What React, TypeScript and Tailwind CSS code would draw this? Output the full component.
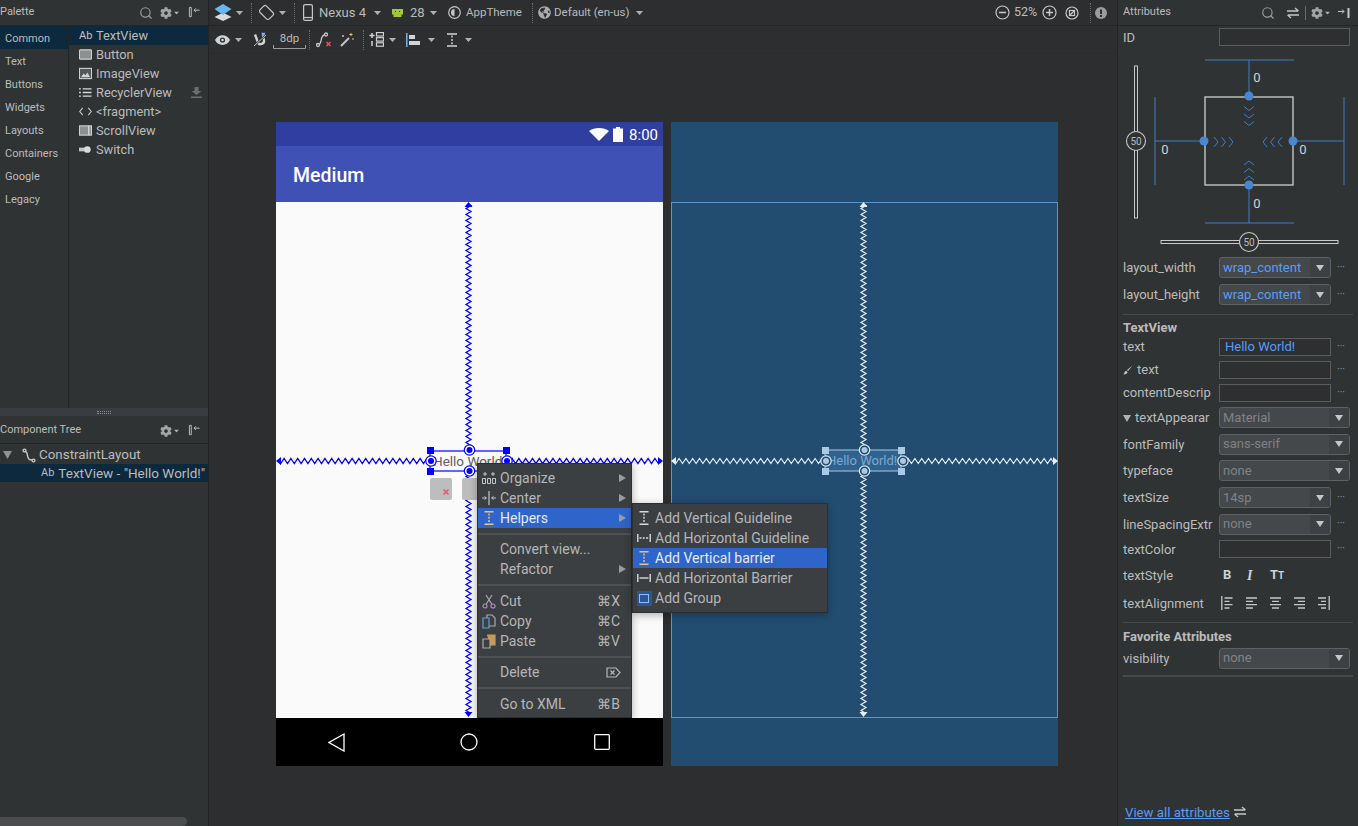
import { Search } from "lucide-react";
import { FaCog, FaGlobeAmericas } from "react-icons/fa";
import type { ReactNode } from "react";

const font = "font-['Roboto','Liberation_Sans',sans-serif]";

function zigzagV(x: number, y1: number, y2: number) {
  let d = `M${x} ${y1}`;
  let side = 1;
  for (let y = y1 + 1.5; y < y2; y += 3) {
    d += ` L${x + side * 2.5} ${y}`;
    side = -side;
  }
  return d;
}

function zigzagH(y: number, x1: number, x2: number) {
  let d = `M${x1} ${y}`;
  let side = 1;
  for (let x = x1 + 1.7; x < x2; x += 3.4) {
    d += ` L${x} ${y + side * 2.5}`;
    side = -side;
  }
  return d;
}

const Caret = ({ className = "" }: { className?: string }) => (
  <svg width="7" height="4" viewBox="0 0 7 4" className={`shrink-0 ${className}`}>
    <path d="M0 0h7L3.5 4z" fill="#afb1b3" />
  </svg>
);

const DottedSep = ({ className = "" }: { className?: string }) => (
  <div className={`h-[20px] w-0 shrink-0 border-l border-dotted border-[#6a6c6e] ${className}`} />
);

function Ico({ size = 14, children, className = "" }: { size?: number; children: ReactNode; className?: string }) {
  return (
    <svg width={size} height={size} viewBox="0 0 14 14" fill="none" stroke="#c4c6c8" strokeWidth="1.2" className={`shrink-0 ${className}`}>
      {children}
    </svg>
  );
}

const PinIcon = () => (
  <Ico size={13}>
    <path d="M1.5 1.5h2v10h-2z" strokeWidth="1" />
    <path d="M12.5 4.5H6.5M8.5 2.5l-2 2 2 2" strokeWidth="1" />
  </Ico>
);

const paletteCats = ["Common", "Text", "Buttons", "Widgets", "Layouts", "Containers", "Google", "Legacy"];

const paletteItems: { label: string; icon: ReactNode; h: string }[] = [
  { label: "TextView", h: "h-[19px]", icon: <span className="w-[13px] text-[11px] leading-none text-[#c4c6c8]">Ab</span> },
  {
    label: "Button",
    h: "h-[19px]",
    icon: (
      <Ico size={13}>
        <rect x="0.5" y="2" width="13" height="10" rx="1" fill="#8d8f91" stroke="#d0d0d0" />
      </Ico>
    ),
  },
  {
    label: "ImageView",
    h: "h-[19px]",
    icon: (
      <Ico size={13}>
        <rect x="0.5" y="1.5" width="13" height="11" fill="#55585a" stroke="#d0d0d0" />
        <path d="M2 11l3-4 2 2 2-3 3 5z" fill="#d0d0d0" stroke="none" />
      </Ico>
    ),
  },
  {
    label: "RecyclerView",
    h: "h-[19px]",
    icon: (
      <Ico size={13}>
        <path d="M0 3h2M4 3h9.5M0 7h2M4 7h9.5M0 11h2M4 11h9.5" stroke="#d8d8d8" strokeWidth="1.4" />
      </Ico>
    ),
  },
  {
    label: "<fragment>",
    h: "h-[19px]",
    icon: (
      <Ico size={13}>
        <path d="M4 3L0.8 7 4 11M10 3l3.2 4L10 11" />
      </Ico>
    ),
  },
  {
    label: "ScrollView",
    h: "h-[19px]",
    icon: (
      <Ico size={13}>
        <rect x="0.5" y="2" width="13" height="10" fill="#8d8f91" stroke="#d0d0d0" />
        <path d="M10.5 2v10" stroke="#d0d0d0" strokeWidth="1.6" />
      </Ico>
    ),
  },
  {
    label: "Switch",
    h: "h-[19px]",
    icon: (
      <Ico size={13}>
        <rect x="0" y="5" width="8" height="4" fill="#c4c6c8" stroke="none" />
        <circle cx="9" cy="7" r="3.6" fill="#dadada" stroke="none" />
      </Ico>
    ),
  },
];

function LeftPanel() {
  return (
    <aside className="flex h-full w-[209px] shrink-0 flex-col border-r border-[#212325] bg-[#303334]">
      <header className="flex h-[26px] shrink-0 items-center border-b border-[#232527] text-[11px] text-[#bbbbbb]">
        <span className="flex-1">Palette</span>
        <Search size={14} color="#9a9c9e" className="mr-[7px]" />
        <FaCog size={12} color="#a2a4a6" />
        <Caret className="ml-[1px] mr-[8px] scale-75" />
        <PinIcon />
        <span className="w-[7px]" />
      </header>
      <div className="flex h-[382px] shrink-0">
        <div className="w-[69px] shrink-0 border-r border-[#222426]">
          {paletteCats.map((c, i) => (
            <div key={c} className={`flex h-[23px] items-center pl-[5px] pt-[3px] text-[11px] text-[#bbbbbb] ${i === 0 ? "bg-[#0d293e]" : ""}`}>
              {c}
            </div>
          ))}
        </div>
        <div className="flex-1">
          {paletteItems.map((it, i) => (
            <div
              key={it.label}
              className={`flex ${it.h} items-center gap-[4px] pl-[10px] text-[12.8px] text-[#bbbbbb] ${i === 0 ? "bg-[#0d293e]" : ""}`}
            >
              {it.icon}
              <span className="flex-1">{it.label}</span>
              {it.label === "RecyclerView" && (
                <svg width="11" height="11" viewBox="0 0 11 11" className="mr-[6px]">
                  <path d="M3.5 0h4v4h3L5.500 8 .5 4h3zM0 9.500h11V11H0z" fill="#6c6e70" />
                </svg>
              )}
            </div>
          ))}
        </div>
      </div>
      <div className="flex h-[8px] shrink-0 items-center justify-center bg-[#3a3d3f]">
        <div className="h-[3px] w-[14px] border-y border-dotted border-[#8a8c8e]" />
      </div>
      <div className="flex h-[28px] shrink-0 items-center border-b border-[#232527] pt-[2px] text-[11px] text-[#bbbbbb]">
        <span className="flex-1">Component Tree</span>
        <FaCog size={12} color="#a2a4a6" />
        <Caret className="ml-[1px] mr-[8px] scale-75" />
        <PinIcon />
        <span className="w-[7px]" />
      </div>
      <div className="flex h-[20px] shrink-0 items-center pl-[3px] pt-[2px] text-[13.4px] text-[#bbbbbb]">
        <svg width="9" height="8" viewBox="0 0 9 8" className="mr-[10px]">
          <path d="M0 0h9L4.500 8z" fill="#8f9193" />
        </svg>
        <svg width="14" height="15" viewBox="0 0 14 15" fill="none" stroke="#c8c8c8" strokeWidth="1.4" className="mr-[3px]">
          <circle cx="2.500" cy="2.500" r="1.400" />
          <circle cx="11.500" cy="12.500" r="1.400" />
          <path d="M3.500 3.500c3 1 1 7 4 8l2.500.5" />
        </svg>
        ConstraintLayout
      </div>
      <div className="flex h-[18px] shrink-0 items-center overflow-hidden whitespace-nowrap bg-[#0d293e] pl-[41px] text-[13.5px] text-[#bbbbbb]">
        <span className="mr-[4px] text-[11px]">Ab</span>TextView - "Hello World!"
      </div>
      <div className="flex-1" />
      <div className="h-[9px] w-[187px] shrink-0 rounded-r-full bg-[#4b4d4e]" />
    </aside>
  );
}

function TopToolbar() {
  return (
    <div className="flex h-[26px] shrink-0 items-center border-b border-[#232527] pl-[5px] text-[12.5px] text-[#bbbbbb]">
      <svg width="18" height="17" viewBox="0 0 18 17" className="shrink-0">
        <path d="M9 8.500L0.500 13 9 17l8.500-4z" fill="#d8dadc" />
        <path d="M9 0L0.500 5 9 11l8.500-6z" fill="#6bb5ef" />
      </svg>
      <Caret className="ml-[4px]" />
      <DottedSep className="ml-[8px]" />
      <svg width="17" height="17" viewBox="0 0 17 17" fill="none" stroke="#c4c6c8" strokeWidth="1.200" className="ml-[6px] shrink-0">
        <g transform="rotate(-45 8.500 8.500)">
          <rect x="4" y="2" width="9" height="13" rx="2" />
        </g>
      </svg>
      <Caret className="ml-[4px]" />
      <DottedSep className="ml-[8px]" />
      <svg width="10" height="17" viewBox="0 0 10 17" fill="none" stroke="#c4c6c8" strokeWidth="1.2" className="ml-[8px] shrink-0">
        <rect x="0.600" y="0.600" width="8.800" height="15.800" rx="1.500" />
        <path d="M1 13.500h8" />
      </svg>
      <span className="ml-[6px] w-[49px] whitespace-nowrap text-[13px]">Nexus 4</span>
      <Caret className="ml-[6px]" />
      <svg width="11" height="8" viewBox="0 0 11 8" className="ml-[11px] shrink-0">
        <path d="M0 0h11v5.500H9.500V8h-8V5.500H0z" fill="#a4c639" />
        <path d="M3 2h1v1H3zM7 2h1v1H7z" fill="#2d2f31" />
      </svg>
      <span className="ml-[7px] w-[15px] text-[13px]">28</span>
      <Caret className="ml-[5px]" />
      <svg width="13" height="13" viewBox="0 0 13 13" className="ml-[11px] shrink-0">
        <circle cx="6.500" cy="6.500" r="5.800" fill="none" stroke="#c4c6c8" strokeWidth="1.200" />
        <path d="M6.500 3a3.500 3.500 0 0 0 0 7z" fill="#c4c6c8" />
      </svg>
      <span className="ml-[5px] w-[56px] whitespace-nowrap text-[11.500px]">AppTheme</span>
      <DottedSep className="ml-[10px]" />
      <FaGlobeAmericas size={13} color="#a9abad" className="ml-[5px] shrink-0" />
      <span className="ml-[3px] w-[74px] whitespace-nowrap text-[11.500px]">Default (en-us)</span>
      <Caret className="ml-[8px]" />
      <div className="flex-1" />
      <svg width="15" height="15" viewBox="0 0 15 15" fill="none" stroke="#c4c6c8" strokeWidth="1.200" className="shrink-0">
        <circle cx="7.500" cy="7.500" r="6.500" />
        <path d="M4 7.500h7" strokeWidth="1.600" />
      </svg>
      <span className="ml-[4px] w-[24px] text-[12.5px]">52%</span>
      <svg width="15" height="15" viewBox="0 0 15 15" fill="none" stroke="#c4c6c8" strokeWidth="1.200" className="ml-[4px] shrink-0">
        <circle cx="7.500" cy="7.500" r="6.500" />
        <path d="M4 7.500h7M7.500 4v7" strokeWidth="1.500" />
      </svg>
      <svg width="14" height="14" viewBox="0 0 14 14" fill="none" stroke="#c4c6c8" strokeWidth="1.200" className="ml-[8px] shrink-0">
        <circle cx="7" cy="7" r="6" />
        <rect x="4.500" y="4.500" width="5" height="5" />
        <path d="M4.500 9.500l5-5" />
      </svg>
      <DottedSep className="ml-[11px]" />
      <svg width="12" height="12" viewBox="0 0 12 12" className="ml-[4px] mr-[10px] shrink-0">
        <circle cx="6" cy="6" r="6" fill="#9a9c9e" />
        <path d="M5 2.500h2v4.500H5zM5 8h2v2H5z" fill="#2d2f31" />
      </svg>
    </div>
  );
}

function SecondToolbar() {
  return (
    <div className="flex h-[28px] shrink-0 items-center border-b border-[#292b2d] pl-[6px] text-[#bbbbbb]">
      <svg width="15" height="10" viewBox="0 0 15 10" className="shrink-0">
        <path d="M0 5c3-6.500 12-6.500 15 0-3 6.500-12 6.500-15 0z" fill="#d0d2d4" />
        <circle cx="7.500" cy="5" r="2.600" fill="#2d2f31" />
        <circle cx="7.500" cy="5" r="1.300" fill="#d0d2d4" />
      </svg>
      <Caret className="ml-[5px]" />
      <svg width="14" height="15" viewBox="0 0 14 15" fill="none" className="ml-[11px] shrink-0">
        <path d="M2 2.500l3 8c1 3 6.500 1.500 6-2l-1-5.500" stroke="#d0d2d4" strokeWidth="2.400" />
        <path d="M8.500 0.800h3.500v3H9z" fill="#6bb5ef" />
        <path d="M1 14L13 3" stroke="#2d2f31" strokeWidth="2.200" />
        <path d="M1 14L13 3" stroke="#d0d2d4" strokeWidth="0.900" />
      </svg>
      <div className="relative ml-[6px] flex h-[18px] w-[33px] shrink-0 items-start justify-center text-[11.5px] leading-[14px]">
        8dp
        <svg width="33" height="4" viewBox="0 0 33 4" className="absolute bottom-0 left-0" fill="none" stroke="#9a9c9e">
          <path d="M0.500 0v3.500h32V0" />
        </svg>
      </div>
      <DottedSep className="ml-[3px]" />
      <svg width="16" height="16" viewBox="0 0 16 16" fill="none" stroke="#c4c6c8" strokeWidth="1.300" className="ml-[6px] shrink-0">
        <circle cx="10" cy="2.500" r="1.500" />
        <circle cx="2" cy="13" r="1.500" />
        <path d="M3 12.500C6 12 4 3.500 8.500 3" />
        <path d="M10.500 10l4 4M14.500 10l-4 4" stroke="#ee4c6a" strokeWidth="1.500" />
      </svg>
      <svg width="15" height="15" viewBox="0 0 15 15" fill="none" stroke="#c4c6c8" strokeWidth="1.500" className="ml-[8px] shrink-0">
        <path d="M1 14l8-8" strokeWidth="2" />
        <path d="M11 1v3M9.500 2.500h3M13 6v2M3 3v2M2 4h2" stroke="#e8c46a" strokeWidth="1" />
      </svg>
      <DottedSep className="ml-[8px]" />
      <svg width="15" height="15" viewBox="0 0 15 15" fill="none" stroke="#d0d2d4" strokeWidth="1.200" className="ml-[5px] shrink-0">
        <rect x="7.500" y="0.600" width="7" height="3.400" />
        <rect x="7.500" y="5.700" width="7" height="3.400" />
        <rect x="7.500" y="10.800" width="7" height="3.400" />
        <path d="M3 1v5M.5 3.500h5M3 9v5" strokeWidth="1.500" />
      </svg>
      <Caret className="ml-[5px]" />
      <svg width="15" height="14" viewBox="0 0 15 14" className="ml-[10px] shrink-0">
        <path d="M0 0h1.500v14H0z" fill="#6bb5ef" />
        <path d="M3 2h6v4H3zM3 8h11v4H3z" fill="#d0d2d4" />
      </svg>
      <Caret className="ml-[7px]" />
      <svg width="12" height="14" viewBox="0 0 12 14" stroke="#d0d2d4" className="ml-[11px] shrink-0">
        <path d="M1 1h10M1 13h10" strokeWidth="1.600" />
        <path d="M6 2.500v9" strokeWidth="1.400" strokeDasharray="2 1.400" />
      </svg>
      <Caret className="ml-[7px]" />
    </div>
  );
}

function PhoneOverlay() {
  return (
    <svg width="387" height="516" viewBox="0 0 387 516" className="absolute left-0 top-0" fill="none">
      <path d={zigzagV(192.500, 2, 248)} stroke="#0000ff" strokeWidth="1.300" />
      <path d={zigzagV(192.500, 270, 512)} stroke="#0000ff" strokeWidth="1.300" />
      <path d={zigzagH(259, 3, 154)} stroke="#0000ff" strokeWidth="1.300" />
      <path d={zigzagH(259, 231, 384)} stroke="#0000ff" strokeWidth="1.300" />
      <path d="M192.500 0l4 5h-8zM192.500 515l4-5h-8zM0 259l5-4v8zM387 259l-5-4v8z" fill="#0000ff" />
      <rect x="154" y="249" width="76" height="20" stroke="#0000ff" strokeWidth="1.200" />
      <path d="M151 245h7v7h-7zM227 245h7v7h-7zM151 266h7v7h-7zM227 266h7v7h-7z" fill="#0000ff" />
      {[
        [155, 259],
        [231, 259],
        [193.500, 248],
        [193.500, 269],
      ].map(([cx, cy]) => (
        <g key={`${cx}-${cy}`}>
          <circle cx={cx} cy={cy} r="5.200" fill="#ffffff" stroke="#0000ff" strokeWidth="1.200" />
          <circle cx={cx} cy={cy} r="3" fill="#0000ff" />
        </g>
      ))}
    </svg>
  );
}

function BlueprintOverlay() {
  return (
    <svg width="387" height="516" viewBox="0 0 387 516" className="absolute left-0 top-0" fill="none">
      <path d={zigzagV(192.500, 2, 248)} stroke="#e6edf3" strokeWidth="1.200" />
      <path d={zigzagV(192.500, 270, 512)} stroke="#e6edf3" strokeWidth="1.200" />
      <path d={zigzagH(259, 3, 154)} stroke="#e6edf3" strokeWidth="1.200" />
      <path d={zigzagH(259, 232, 384)} stroke="#e6edf3" strokeWidth="1.200" />
      <path d="M192.500 0l4 5h-8zM192.500 515l4-5h-8zM0 259l5-4v8zM387 259l-5-4v8z" fill="#e6edf3" />
      <rect x="154" y="248" width="76" height="21" fill="#30628f" stroke="#a9c9e6" strokeWidth="1" />
      <path d="M151 245h7v7h-7zM227 245h7v7h-7zM151 266h7v7h-7zM227 266h7v7h-7z" fill="#a9c9e6" />
    </svg>
  );
}

function BlueprintHandles() {
  return (
    <svg width="387" height="516" viewBox="0 0 387 516" className="absolute left-0 top-0" fill="none">
      {[
        [155, 259],
        [232, 259],
        [193.500, 248],
        [193.500, 269],
      ].map(([cx, cy]) => (
        <g key={`${cx}-${cy}`}>
          <circle cx={cx} cy={cy} r="5.200" fill="#224d70" stroke="#dfe8ef" strokeWidth="1.200" />
          <circle cx={cx} cy={cy} r="3" fill="#a9c9e6" />
        </g>
      ))}
    </svg>
  );
}

function MenuRow({
  label,
  icon,
  shortcut,
  arrow,
  active,
}: {
  label: string;
  icon?: ReactNode;
  shortcut?: ReactNode;
  arrow?: boolean;
  active?: boolean;
}) {
  return (
    <div className={`flex h-[20px] items-center text-[14px] ${active ? "bg-[#2f65ca] text-[#e6e9ee]" : "text-[#b4b6b8]"}`}>
      <span className="flex w-[22px] shrink-0 justify-center">{icon}</span>
      <span className="flex-1 whitespace-nowrap">{label}</span>
      {shortcut && <span className="mr-[11px] text-[14px]">{shortcut}</span>}
      {arrow && (
        <svg width="7" height="8" viewBox="0 0 7 8" className="mr-[5px]">
          <path d="M0 0l7 4-7 4z" fill="#9a9c9e" />
        </svg>
      )}
    </div>
  );
}

const MenuSep = ({ className = "my-[4.500px]" }: { className?: string }) => <div className={`h-[2px] bg-[#4e5052] ${className}`} />;

const GuideV = ({ color = "#d8dadc" }: { color?: string }) => (
  <svg width="10" height="14" viewBox="0 0 10 14" stroke={color}>
    <path d="M0.500 0.800h9M0.500 13.200h9" strokeWidth="1.400" />
    <path d="M5 2.500v9" strokeWidth="1.400" strokeDasharray="2 1.300" />
  </svg>
);

const GuideH = ({ solid }: { solid?: boolean }) => (
  <svg width="14" height="10" viewBox="0 0 14 10" stroke="#d8dadc">
    <path d="M0.800 1v8M13.200 1v8" strokeWidth="1.400" />
    <path d="M2.500 5h9" strokeWidth="1.400" strokeDasharray={solid ? undefined : "2 1.300"} />
  </svg>
);

function ContextMenu() {
  return (
    <div className={`absolute left-[268px] top-[409px] w-[155px] border border-[#2c2e30] bg-[#3c3f41] shadow-[0_2px_8px_rgba(0,0,0,0.3)] ${font}`}>
      <div className="pb-[3px] pt-[4px]">
        <MenuRow
          label="Organize"
          arrow
          icon={
            <svg width="14" height="14" viewBox="0 0 14 14" stroke="#c4c6c8" fill="none">
              <path d="M1 3h4M3 1v4M9 3h4M11 1v4" strokeWidth="1" />
              <path d="M0.500 7.500h3v5h-3zM5.500 7.500h3v5h-3zM10.500 7.500h3v5h-3z" strokeWidth="1" />
            </svg>
          }
        />
        <MenuRow
          label="Center"
          arrow
          icon={
            <svg width="14" height="14" viewBox="0 0 14 14" stroke="#c4c6c8" fill="none">
              <path d="M7 0v14" strokeWidth="1.200" />
              <path d="M0 7h4M2.500 5.500L4.500 7l-2 1.500M14 7h-4M11.500 5.500L9.500 7l2 1.500" strokeWidth="1" />
            </svg>
          }
        />
        <MenuRow label="Helpers" arrow active icon={<GuideV color="#e2c884" />} />
        <MenuSep />
        <MenuRow label="Convert view..." />
        <MenuRow label="Refactor" arrow />
        <MenuSep className="my-[5px]" />
        <MenuRow
          label="Cut"
          shortcut="⌘X"
          icon={
            <svg width="14" height="15" viewBox="0 0 14 15" fill="none" stroke="#b085c0" strokeWidth="1.200">
              <circle cx="3" cy="12" r="2" />
              <circle cx="11" cy="12" r="2" />
              <path d="M4 10.500L10 1M10 10.500L4 1" stroke="#a8aaac" />
            </svg>
          }
        />
        <MenuRow
          label="Copy"
          shortcut="⌘C"
          icon={
            <svg width="14" height="15" viewBox="0 0 14 15" fill="none" strokeWidth="1.200">
              <path d="M5 1h5l3 3v8H5z" stroke="#a8aaac" />
              <path d="M1 4h6v10H1z" stroke="#5ba4d6" fill="#3c3f41" />
            </svg>
          }
        />
        <MenuRow
          label="Paste"
          shortcut="⌘V"
          icon={
            <svg width="14" height="15" viewBox="0 0 14 15" fill="none" strokeWidth="1.200">
              <path d="M5 1h8v10H8" fill="#c99a50" stroke="#c99a50" />
              <path d="M1 5h7v9H1z" stroke="#a8aaac" fill="#3c3f41" />
            </svg>
          }
        />
        <MenuSep />
        <MenuRow
          label="Delete"
          shortcut={
            <svg width="15" height="11" viewBox="0 0 15 11" fill="none" stroke="#b4b6b8" strokeWidth="1.200" className="-mr-[1px]">
              <path d="M1 1h9l4 4.500L10 10H1z" />
              <path d="M4.500 3.500l4 4M8.500 3.500l-4 4" />
            </svg>
          }
        />
        <MenuSep className="my-[5px]" />
        <MenuRow label="Go to XML" shortcut="⌘B" />
      </div>
      <div className="absolute left-[154px] top-[39px] w-[196px] border border-[#2c2e30] bg-[#3c3f41] py-[4px] shadow-[0_2px_8px_rgba(0,0,0,0.3)]">
        <MenuRow label="Add Vertical Guideline" icon={<GuideV />} />
        <MenuRow label="Add Horizontal Guideline" icon={<GuideH />} />
        <MenuRow label="Add Vertical barrier" active icon={<GuideV color="#e2c884" />} />
        <MenuRow label="Add Horizontal Barrier" icon={<GuideH solid />} />
        <MenuRow
          label="Add Group"
          icon={
            <span className="flex h-[15px] w-[15px] items-center justify-center bg-[#2b5499]">
              <span className="h-[9px] w-[10px] border border-[#8fbdf0]" />
            </span>
          }
        />
      </div>
    </div>
  );
}

function Canvas() {
  return (
    <div className={`relative flex flex-1 gap-[8px] pl-[67px] pt-[68px] ${font}`}>
      <div className="flex h-[644px] w-[387px] shrink-0 flex-col">
        <div className="flex h-[24px] shrink-0 items-center justify-end bg-[#303f9f] pr-[5px] pt-[3px] text-[15px] text-white">
          <svg width="20" height="13" viewBox="0 0 20 13" className="mr-[3px] -mt-[3px]">
            <path d="M0 3C5-1 15-1 20 3L10 13z" fill="#ffffff" />
          </svg>
          <svg width="12" height="15" viewBox="0 0 12 15" className="mr-[5px] -mt-[3px]">
            <path d="M4 0h4v1.500h3V15H1V1.500h3z" fill="#ffffff" />
          </svg>
          8:00
        </div>
        <div className="flex h-[56px] shrink-0 items-center bg-[#3f51b5] pl-[17px] pt-[3px] text-[19.500px] font-medium text-white">Medium</div>
        <div className="relative h-[516px] shrink-0 bg-[#fafafa]">
          <span className="absolute left-[157px] top-[251px] whitespace-nowrap text-[13.500px] leading-[16px] text-[#5f5f5f]">Hello World!</span>
          <PhoneOverlay />
          <div className="absolute left-[154px] top-[276px] h-[22px] w-[22px] rounded-[2px] bg-[#bdbdbd]">
            <svg width="6" height="6" viewBox="0 0 6 6" className="absolute left-[13px] top-[11px]" stroke="#ee4c6a" strokeWidth="1.300">
              <path d="M0.500 0.500l5 5M5.500 0.500l-5 5" />
            </svg>
          </div>
          <div className="absolute left-[186px] top-[276px] h-[22px] w-[22px] rounded-[2px] bg-[#bdbdbd]" />
        </div>
        <div className="flex h-[48px] shrink-0 items-center bg-black pl-[52px]">
          <svg width="17" height="19" viewBox="0 0 17 19" fill="none" stroke="#ffffff" strokeWidth="1.300">
            <path d="M16 1L1 9.500 16 18z" />
          </svg>
          <svg width="18" height="18" viewBox="0 0 18 18" fill="none" stroke="#ffffff" strokeWidth="1.300" className="ml-[115px]">
            <circle cx="9" cy="9" r="8" />
          </svg>
          <svg width="16" height="16" viewBox="0 0 16 16" fill="none" stroke="#ffffff" strokeWidth="1.300" className="ml-[116px]">
            <rect x="0.700" y="0.700" width="14.600" height="14.600" rx="1" />
          </svg>
        </div>
      </div>

      <div className="flex h-[644px] w-[387px] shrink-0 flex-col bg-[#224d70]">
        <div className="h-[80px] shrink-0" />
        <div className="relative h-[516px] shrink-0 border border-[#5f95c4]">
          <div className="absolute -left-px -top-px">
            <BlueprintOverlay />
            <span className="absolute left-[156px] top-[251px] whitespace-nowrap text-[13px] leading-[16px] text-[#7fa8cc]">Hello World!</span>
            <BlueprintHandles />
          </div>
        </div>
      </div>
      <ContextMenu />
    </div>
  );
}

function ConstraintWidget() {
  const blue = "#3f7fc4";
  return (
    <svg width="240" height="206" viewBox="1118 48 240 206" fill="none" className={`shrink-0 ${font}`}>
      <path d="M1205 60h89M1249 60v37M1155 97v88M1155 141h50M1344 97v88M1293 141h51M1205 223h89M1249 185v38" stroke={blue} strokeWidth="1" />
      <rect x="1205" y="97" width="88" height="88" stroke="#d0d0d0" strokeWidth="1.300" />
      <rect x="1134.500" y="66" width="3" height="152" stroke="#c8c8c8" strokeWidth="1" fill="#303334" />
      <rect x="1161" y="240.500" width="177" height="3" stroke="#c8c8c8" strokeWidth="1" fill="#303334" />
      <circle cx="1136" cy="141" r="9.500" fill="#303334" stroke="#c8c8c8" strokeWidth="1.100" />
      <circle cx="1249" cy="242" r="9.500" fill="#303334" stroke="#c8c8c8" strokeWidth="1.100" />
      <text x="1136" y="145" textAnchor="middle" fontSize="10" fill="#bbbbbb">50</text>
      <text x="1249" y="246" textAnchor="middle" fontSize="10" fill="#bbbbbb">50</text>
      <text x="1257" y="82" textAnchor="middle" fontSize="13" fill="#d0d0d0">0</text>
      <text x="1165" y="154" textAnchor="middle" fontSize="13" fill="#d0d0d0">0</text>
      <text x="1303" y="154" textAnchor="middle" fontSize="13" fill="#d0d0d0">0</text>
      <text x="1257" y="208" textAnchor="middle" fontSize="13" fill="#d0d0d0">0</text>
      <g fill="#4a86d0">
        <circle cx="1249" cy="96" r="4.500" />
        <circle cx="1249" cy="185" r="4.500" />
        <circle cx="1204" cy="141" r="4.500" />
        <circle cx="1293" cy="141" r="4.500" />
      </g>
      <path
        d="M1244 106.500l5 4 5-4M1244 114l5 4 5-4M1244 121.500l5 4 5-4M1244 165l5-4 5 4M1244 172.500l5-4 5 4M1244 180l5-4 5 4M1214 137l4 5-4 5M1221.500 137l4 5-4 5M1229 137l4 5-4 5M1267 137l-4 5 4 5M1274.500 137l-4 5 4 5M1282 137l-4 5 4 5"
        stroke={blue}
        strokeWidth="1"
      />
    </svg>
  );
}

const More = () => <span className="ml-[3px] w-[14px] text-center text-[10px] leading-[8px] text-[#9a9c9e]">···</span>;

function TextBox({ value, wide }: { value?: string; wide?: boolean }) {
  return (
    <div className={`flex h-[18px] items-center border border-[#5a5c5e] bg-[#2d2f31] pl-[5px] text-[13px] text-[#589df6] ${wide ? "w-[131px]" : "w-[112px]"}`}>
      {value}
    </div>
  );
}

function Dropdown({ value, wide, blue }: { value: string; wide?: boolean; blue?: boolean }) {
  return (
    <div className={`flex h-[21px] items-center overflow-hidden rounded-[3px] border border-[#5e6163] bg-[#45484a] text-[13px] ${wide ? "w-[131px]" : "w-[112px]"} ${blue ? "text-[#589df6]" : "text-[#808284]"}`}>
      <span className="flex-1 pl-[3px]">{value}</span>
      <span className="flex h-full w-[20px] items-center justify-center bg-[#3e4143]">
        <svg width="8" height="6" viewBox="0 0 8 6">
          <path d="M0 0h8L4 6z" fill="#c4c6c8" />
        </svg>
      </span>
    </div>
  );
}

function AttrRow({ label, h, children, more }: { label: ReactNode; h: string; children?: ReactNode; more?: boolean }) {
  return (
    <div className={`flex ${h} shrink-0 items-center pl-[5px] text-[13px] text-[#bbbbbb]`}>
      <span className="w-[96px] shrink-0 whitespace-nowrap pt-[1px]">{label}</span>
      {children}
      {more && <More />}
    </div>
  );
}

const SwapIcon = ({ className = "" }: { className?: string }) => (
  <svg width="14" height="12" viewBox="0 0 14 12" fill="none" stroke="#c4c6c8" strokeWidth="1.300" className={className}>
    <path d="M1 4h11M9 1l3.500 3M13 8H2M5 11L1.500 8" />
  </svg>
);

function RightPanel() {
  return (
    <aside className={`flex h-full w-[241px] shrink-0 flex-col border-l border-[#212325] bg-[#303334] ${font}`}>
      <header className="flex h-[26px] shrink-0 items-center border-b border-[#232527] pl-[5px] text-[11px] text-[#bbbbbb]">
        <span className="flex-1">Attributes</span>
        <Search size={14} color="#9a9c9e" className="mr-[11px]" />
        <SwapIcon className="mr-[5px]" />
        <div className="mr-[5px] h-[14px] border-l border-[#6a6c6e]" />
        <FaCog size={12} color="#a2a4a6" />
        <Caret className="ml-[1px] mr-[7px] scale-75" />
        <svg width="12" height="12" viewBox="0 0 12 12" fill="none" stroke="#c4c6c8" className="mr-[8px]">
          <path d="M0 4.500h6M4 2.500l2 2-2 2" />
          <path d="M9.500 1h2v10h-2z" fill="#c4c6c8" stroke="none" />
        </svg>
      </header>
      <AttrRow label="ID" h="h-[22px]">
        <TextBox wide />
      </AttrRow>
      <ConstraintWidget />
      <AttrRow label="layout_width" h="h-[27px]" more>
        <Dropdown value="wrap_content" blue />
      </AttrRow>
      <AttrRow label="layout_height" h="h-[27px]" more>
        <Dropdown value="wrap_content" blue />
      </AttrRow>
      <div className="mx-[5px] mt-[6px] h-px shrink-0 bg-[#47494b]" />
      <div className="flex h-[20px] shrink-0 items-center pl-[5px] pt-[5px] text-[13px] font-bold text-[#bbbbbb]">TextView</div>
      <AttrRow label="text" h="h-[23px]" more>
        <TextBox value="Hello World!" />
      </AttrRow>
      <AttrRow
        label={
          <span className="flex items-center">
            <svg width="10" height="10" viewBox="0 0 10 10" className="mr-[4px]">
              <path d="M9.500 0.500L4 5 5 6zM0.500 9.500c2.500 0 4-1 4-2.500L3.200 5.800C2 6 1.500 8 .5 9.500z" fill="#c4c6c8" />
            </svg>
            text
          </span>
        }
        h="h-[23px]"
        more
      >
        <TextBox />
      </AttrRow>
      <AttrRow label="contentDescrip" h="h-[23px]" more>
        <TextBox />
      </AttrRow>
      <AttrRow
        label={
          <span className="flex items-center">
            <svg width="8" height="7" viewBox="0 0 8 7" className="mr-[4px] shrink-0">
              <path d="M0 0h8L4 7z" fill="#b0b2b4" />
            </svg>
            textAppearar
          </span>
        }
        h="h-[27px]"
      >
        <Dropdown value="Material" wide />
      </AttrRow>
      <AttrRow label="fontFamily" h="h-[26px]">
        <Dropdown value="sans-serif" wide />
      </AttrRow>
      <AttrRow label="typeface" h="h-[27px]">
        <Dropdown value="none" wide />
      </AttrRow>
      <AttrRow label="textSize" h="h-[27px]" more>
        <Dropdown value="14sp" />
      </AttrRow>
      <AttrRow label="lineSpacingExtr" h="h-[26px]" more>
        <Dropdown value="none" />
      </AttrRow>
      <AttrRow label="textColor" h="h-[24px]" more>
        <TextBox />
      </AttrRow>
      <AttrRow label="textStyle" h="h-[28px]">
        <span className="ml-[4px] w-[24px] text-[13px] font-bold text-[#d0d2d4]">B</span>
        <span className="w-[23px] font-['Liberation_Serif',serif] text-[14px] font-bold italic text-[#d0d2d4]">I</span>
        <span className="text-[13px] font-bold text-[#d0d2d4]">
          T<span className="text-[10px]">T</span>
        </span>
      </AttrRow>
      <AttrRow label="textAlignment" h="h-[28px]">
        <span className="ml-[2px] flex gap-[11px]">
          {[
            "M0.800 0v14M3.500 2h8M3.500 5.300h5M3.500 8.600h8M3.500 12h5",
            "M1 2h11M1 5.300h7M1 8.600h11M1 12h7",
            "M1 2h11M3 5.300h7M1 8.600h11M3 12h7",
            "M1 2h11M5 5.300h7M1 8.600h11M5 12h7",
            "M12.200 0v14M1 2h8M4 5.300h5M1 8.600h8M4 12h5",
          ].map((d) => (
            <svg key={d} width="13" height="14" viewBox="0 0 13 14" fill="none" stroke="#c4c6c8" strokeWidth="1.300">
              <path d={d} />
            </svg>
          ))}
        </span>
      </AttrRow>
      <div className="mx-[5px] mt-[5px] h-px shrink-0 bg-[#47494b]" />
      <div className="flex h-[24px] shrink-0 items-center pl-[5px] pt-[3px] text-[13px] font-bold text-[#bbbbbb]">Favorite Attributes</div>
      <AttrRow label="visibility" h="h-[22px]">
        <Dropdown value="none" wide />
      </AttrRow>
      <div className="mx-[5px] mt-[6px] h-[2px] shrink-0 bg-[#47494b]" />
      <div className="flex-1" />
      <div className="flex h-[23px] shrink-0 items-start pl-[7px] text-[13.200px] text-[#589df6]">
        <span className="underline">View all attributes</span>
        <SwapIcon className="ml-[3px] mt-[3px]" />
      </div>
    </aside>
  );
}

export default function App() {
  return (
    <div className={`flex h-[826px] w-[1358px] overflow-hidden bg-[#2d2e30] ${font}`}>
      <LeftPanel />
      <main className="flex h-full min-w-0 flex-1 flex-col">
        <TopToolbar />
        <SecondToolbar />
        <Canvas />
      </main>
      <RightPanel />
    </div>
  );
}
